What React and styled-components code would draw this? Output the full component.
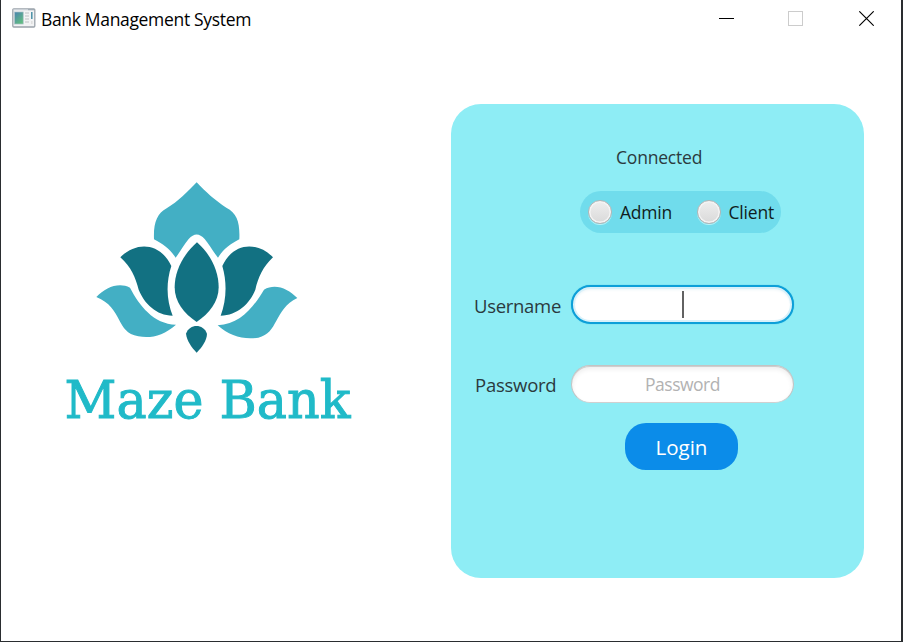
import React from "react";
import styled, { createGlobalStyle } from "styled-components";

const GlobalStyle = createGlobalStyle`
  * { box-sizing: border-box; }
  body { margin: 0; background: #fff; font-family: "Open Sans", "Noto Sans", sans-serif; }
`;

const Window = styled.div`
  width: 903px;
  height: 642px;
  overflow: hidden;
  display: flex;
  flex-direction: column;
  background: #fff;
  border: solid #2a2d30;
  border-width: 0 2px 1px 1px;
`;

const TitleBar = styled.header`
  height: 38px;
  flex: none;
  display: flex;
  align-items: center;
  padding: 0 27px 2px 11px;
`;

const Label = styled.span`
  font-size: ${(p) => p.$size}px;
  line-height: 24px;
  letter-spacing: ${(p) => p.$spacing || 0}px;
  color: ${(p) => p.$color || "#2b3a3e"};
  white-space: nowrap;
`;

const Title = styled(Label)`
  margin-left: 5px;
  padding-top: 1px;
  flex: 1;
`;

const Controls = styled.div`
  display: flex;
  gap: 54px;
  svg { display: block; }
`;

const Body = styled.main`
  flex: 1;
  display: flex;
  align-items: flex-start;
`;

const Logo = styled.svg`
  display: block;
  flex: none;
  margin: 137px 81px 0 59px;
`;

const Card = styled.section`
  width: 413px;
  height: 474px;
  margin-top: 66px;
  flex: none;
  border-radius: 30px;
  background: #8eedf5;
  display: flex;
  flex-direction: column;
`;

const Status = styled.div`
  display: flex;
  height: 24px;
  margin: 41px 0 0 165px;
`;

const RadioGroup = styled.div`
  width: 201px;
  height: 42px;
  margin: 22px 0 0 129px;
  padding: 0 7px 0 8px;
  border-radius: 21px;
  background: #70dcec;
  display: flex;
  align-items: center;
  justify-content: space-between;
`;

const RadioOption = styled.div`
  display: flex;
  align-items: center;
  gap: 8px;
`;

const Radio = styled.span`
  width: 24px;
  height: 24px;
  border-radius: 50%;
  border: 1.5px solid #b5b5b5;
  background: linear-gradient(#efefef, #d9d9d9);
  box-shadow: inset 0 0 0 1.5px #f4f4f4, 0 1px 0 #b9f3f8;
`;

const FieldRow = styled.div`
  display: grid;
  grid-template-columns: 97px 223px;
  align-items: center;
  height: 39px;
  margin: ${(p) => p.$top}px 0 0 23px;
`;

const FieldLabel = styled(Label)`
  padding: 2px 0 0 ${(p) => p.$indent || 0}px;
`;

const Field = styled.div`
  height: ${(p) => (p.$focused ? 39 : 38)}px;
  border-radius: 20px;
  display: flex;
  align-items: center;
  justify-content: center;
  background: #fff;
  border: ${(p) => (p.$focused ? "2px solid #0d9fd8" : "1px solid #c3c3c3")};
  border-bottom-color: ${(p) => (p.$focused ? "#0d9fd8" : "#d0d0d0")};
  box-shadow: ${(p) =>
    p.$focused
      ? "inset 0 0 0 2px #d9f1fa, inset 0 2px 3px 1px #edf5f8, 0 0 1px #2eb9e1"
      : "inset 0 1px 0 #cecece, inset 0 3px 5px #ededed"};
`;

const Caret = styled.span`
  width: 2px;
  height: 27px;
  background: #626262;
`;

const LoginButton = styled.button`
  width: 113px;
  height: 47px;
  margin: 20px 0 0 174px;
  padding: 0;
  border: 0;
  border-radius: 21px;
  background: #0b8ce9;
  font-family: inherit;
`;

function AppIcon() {
  return (
    <svg width="24" height="20" viewBox="0 0 24 20">
      <defs>
        <linearGradient id="screen" x1="0" y1="0" x2="0.7" y2="1">
          <stop offset="0" stopColor="#4b83b0" />
          <stop offset="1" stopColor="#61bd80" />
        </linearGradient>
      </defs>
      <rect x="0.8" y="0.8" width="22" height="18.2" rx="1" fill="#f2f3f4" stroke="#9ba3aa" strokeWidth="1.3" />
      <path d="M1.5 1.7H22" stroke="#cbd1d7" strokeWidth="1.2" />
      <path d="M16.5 1.7h1M18.5 1.7h1M20.5 1.7h1" stroke="#667583" />
      <rect x="2.6" y="4" width="8.6" height="12" fill="url(#screen)" stroke="#a9bfc6" strokeWidth=".7" />
      <path d="M13 5h4M13 8h4M13 11h4M13 14h4" stroke="#d0d2d4" strokeWidth="1.3" />
      <path d="M19.8 4v7" stroke="#498fa5" strokeWidth="1.5" />
      <path d="M19.8 13v3" stroke="#ddd" strokeWidth="1.5" />
    </svg>
  );
}

function WindowControls() {
  return (
    <Controls>
      <svg width="15" height="15" viewBox="0 0 15 15"><path d="M0 7.5h15" stroke="#000" /></svg>
      <svg width="15" height="15" viewBox="0 0 15 15"><rect x=".5" y=".5" width="14" height="14" fill="none" stroke="#ccc" /></svg>
      <svg width="17" height="15" viewBox="-2 0 17 15"><path d="M.3.3l14.4 14.4M14.7.3L.3 14.7" stroke="#000" strokeWidth="1.1" /></svg>
    </Controls>
  );
}

function MazeLogo() {
  return (
    <Logo width="310" height="270" viewBox="60 175 310 270">
      <g transform="translate(80 170) scale(.33333)">
        <path fill="#43afc4" d="M350 37C376 65 407 93 439 113C472 130 480 158 478 208C450 222 430 238 414 263C397 242 387 222 374 207C358 189 342 189 326 207C313 222 303 242 287 263C270 238 250 222 222 208C220 158 231 131 260 115C294 95 323 65 350 37Z" />
        <path fill="#43afc4" d="M49 381C77 352 116 336 150 353C178 406 220 462 288 464C251 497 213 506 175 499C106 487 130 414 49 381Z" />
        <path fill="#43afc4" d="M652 384C624 356 586 339 552 359C522 409 481 464 413 466C448 499 493 510 535 503C596 489 581 419 652 384Z" />
        <path fill="#127182" d="M121 262C168 214 240 216 274 288C257 340 260 392 278 437C229 436 193 401 176 359C166 322 154 292 121 262Z" />
        <path fill="#127182" d="M579 262C532 214 460 216 427 288C442 340 439 392 422 437C472 436 510 400 526 359C535 322 548 292 579 262Z" />
        <path fill="#127182" d="M351 217C391 252 416 301 416 352C416 394 388 431 350 456C311 431 284 394 284 352C284 301 311 252 351 217Z" />
        <path fill="#127182" d="M318 491C329 460 370 460 381 491C380 513 366 531 350 548C334 531 321 513 318 491Z" />
      </g>
      <text x="64.5" y="417.5" textLength="286" lengthAdjust="spacingAndGlyphs" fontFamily="'DejaVu Serif', serif" fontSize="53" fill="#20bac8" stroke="#20bac8" strokeWidth="1">Maze Bank</text>
    </Logo>
  );
}

export default function App() {
  return (
    <>
      <GlobalStyle />
      <Window>
        <TitleBar>
          <AppIcon />
          <Title $size={17.5} $spacing={-0.33} $color="#000">Bank Management System</Title>
          <WindowControls />
        </TitleBar>
        <Body>
          <MazeLogo />
          <Card>
            <Status><Label $size={17.5} $spacing={-0.2}>Connected</Label></Status>
            <RadioGroup>
              <RadioOption><Radio /><Label $size={17.5} $spacing={-0.2} $color="#101c20">Admin</Label></RadioOption>
              <RadioOption><Radio /><Label $size={17.5} $spacing={-0.2} $color="#101c20">Client</Label></RadioOption>
            </RadioGroup>
            <FieldRow $top={52}>
              <FieldLabel $size={18.5} $spacing={-0.3}>Username</FieldLabel>
              <Field $focused><Caret /></Field>
            </FieldRow>
            <FieldRow $top={40}>
              <FieldLabel $size={18.5} $spacing={-0.25} $indent={1}>Password</FieldLabel>
              <Field><Label $size={17.5} $spacing={-0.5} $color="#b2b2b2">Password</Label></Field>
            </FieldRow>
            <LoginButton><Label $size={20.5} $color="#fff">Login</Label></LoginButton>
          </Card>
        </Body>
      </Window>
    </>
  );
}
